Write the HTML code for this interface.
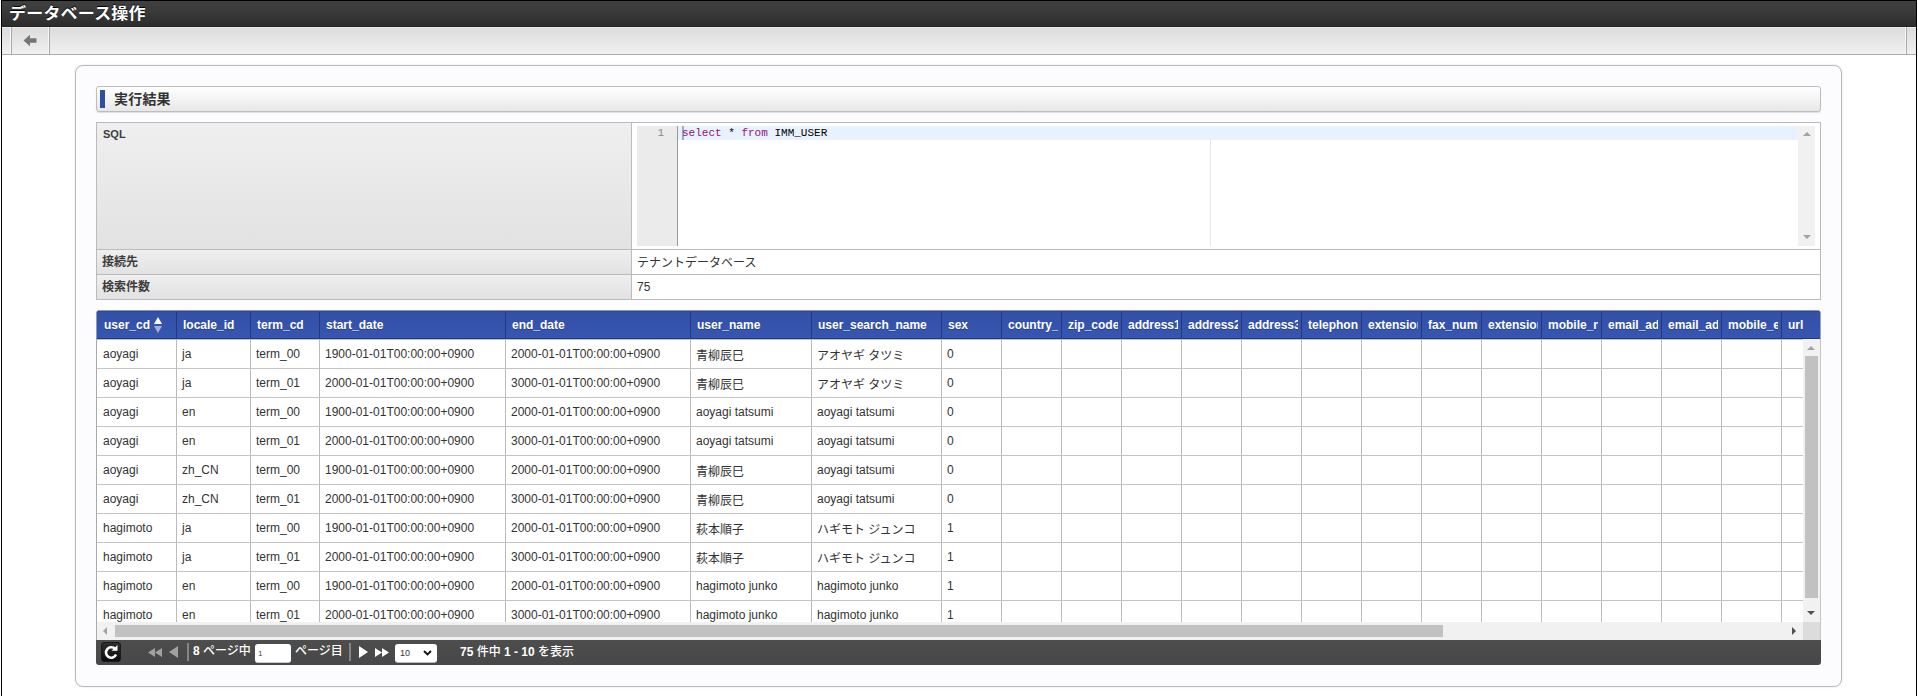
<!DOCTYPE html>
<html lang="ja">
<head>
<meta charset="utf-8">
<title>データベース操作</title>
<style>
*{box-sizing:border-box;}
html,body{margin:0;padding:0;}
body{width:1918px;height:696px;overflow:hidden;background:#fff;position:relative;
 font-family:"Liberation Sans","Noto Sans CJK JP",sans-serif;font-size:12px;color:#333;}
.abs{position:absolute;}
#frame{left:1px;top:0;width:1916px;height:696px;border:1px solid #000;border-bottom:none;background:#fff;}
#title{left:2px;top:1px;width:1914px;height:26px;background:linear-gradient(#404040,#3a3a3a 40%,#2c2c2c 96%,#222 96%);
 color:#fff;font-weight:bold;font-size:17px;line-height:25px;padding-left:7px;letter-spacing:.2px;text-shadow:0 -1px 0 #000;white-space:nowrap;
 font-family:"Liberation Sans","Noto Sans CJK JP",sans-serif;}
#toolbar{left:2px;top:27px;width:1914px;height:28px;background:linear-gradient(#ececec 0,#ececec 1px,#dcdcdc 1px,#f0f0f0);border-bottom:1px solid #aaa;}
.tsep{top:27px;width:2px;height:27px;border-left:1px solid #f6f6f6;border-right:1px solid #aaa;}
#box{left:75px;top:65px;width:1767px;height:622px;border:1px solid #bbb;border-radius:8px;background:#fcfcfe;box-shadow:0 0 2px rgba(0,0,0,.15);}
#sec{left:96px;top:86px;width:1725px;height:26px;border:1px solid #bdbdbd;border-radius:3px;background:linear-gradient(#ffffff,#f4f4f4 50%,#e7e7e7);box-shadow:0 1px 1px rgba(0,0,0,.12);}
#sec i{position:absolute;left:3px;top:3px;width:5px;height:18px;background:#2f4ea5;}
#sec span{position:absolute;left:17px;letter-spacing:.2px;top:0;line-height:24px;font-size:14px;font-weight:bold;color:#333;}
#ptab{left:96px;top:122px;width:1725px;height:178px;border:1px solid #bbb;background:#fff;}
.ph{left:97px;width:535px;background:linear-gradient(#efefef,#e2e2e2);border-bottom:1px solid #bbb;border-right:1px solid #bbb;font-weight:bold;color:#3c3c3c;padding:2px 0 0 5px;font-size:12px;}
.pd{left:632px;width:1188px;background:#fff;border-bottom:1px solid #bbb;padding:5px 0 0 5px;font-size:12px;color:#333;}
#ace{left:637px;top:126px;width:1178px;height:120px;background:#fff;overflow:hidden;font-family:"Liberation Mono",monospace;font-size:11px;}
#gut{left:0;top:0;width:41px;height:120px;background:#ebebeb;border-right:1px solid #9a9a9a;color:#888;}
#gut span{position:absolute;right:13px;top:0;line-height:14px;}
#actl{left:41px;top:0;width:1120px;height:14px;background:#e8f2fe;}
#code{left:45px;top:0;line-height:14px;white-space:pre;color:#000;}
#code b{font-weight:normal;color:#930f80;}
#cursor{left:45px;top:0;width:2px;height:14px;background:#a4abb5;}
#pm{left:573px;top:14px;width:1px;height:106px;background:#e8e8e8;}
#asb{left:1161px;top:0;width:17px;height:120px;background:#f1f1f1;}
.tri-u{position:absolute;width:0;height:0;border-left:4px solid transparent;border-right:4px solid transparent;border-bottom:4px solid #a3a3a3;}
.tri-d{position:absolute;width:0;height:0;border-left:4px solid transparent;border-right:4px solid transparent;border-top:4px solid #a3a3a3;}
.tri-l{position:absolute;width:0;height:0;border-top:4px solid transparent;border-bottom:4px solid transparent;border-right:4px solid #a3a3a3;}
.tri-r{position:absolute;width:0;height:0;border-top:4px solid transparent;border-bottom:4px solid transparent;border-left:4px solid #505050;}
#grid{left:96px;top:310px;width:1725px;height:355px;background:#fff;border-radius:3px;overflow:hidden;}
#ghead{left:0;top:0;width:1725px;height:29px;background:#3452a9;overflow:hidden;border-top:1px solid #8b98c6;border-left:1px solid #8f98b8;border-right:1px solid #9aa3c0;border-radius:3px 3px 0 0;}
#gbody{left:0;top:29px;width:1707px;height:283px;overflow:hidden;border-left:1px solid #aaa;}
table{border-collapse:separate;border-spacing:0;table-layout:fixed;}
#ghead table{position:absolute;left:0;top:0;}
#gbody tr.f td{height:1px;border-bottom:none;padding:0;background:#b9bfd3;}
#ghead th{height:28px;padding:0;border-right:1px solid #24397c;border-top:1px solid #2d4796;border-bottom:1px solid #24397c;background:linear-gradient(#3350a6,#3756b0);color:#fff;font-weight:bold;font-size:12px;text-align:left;overflow:hidden;white-space:nowrap;}
#ghead th div{padding:0 0 0 6px;height:26px;line-height:27px;overflow:hidden;white-space:nowrap;text-shadow:0 1px 0 rgba(0,0,0,.25);margin-right:3px;}
#gbody td{height:29px;padding:0 0 0 5px;border-right:1px solid #bbb;border-bottom:1px solid #c4c4c4;font-size:12px;color:#333;overflow:hidden;white-space:nowrap;}
#gbody td:first-child{padding-left:6px;}
#ghead th:first-child div{padding-left:7px;}
.sort{display:inline-block;position:relative;width:9px;height:14px;margin-left:4px;vertical-align:-3px;}
.sort .up{position:absolute;left:0;top:-1px;border-left:4px solid transparent;border-right:4px solid transparent;border-bottom:7px solid #fff;}
.sort .dn{position:absolute;left:0;top:8px;border-left:4px solid transparent;border-right:4px solid transparent;border-top:7px solid #a3afd8;}
#vsb{left:1707px;top:29px;width:18px;height:283px;background:#f1f1f1;border-right:1px solid #c6c6c6;}
#vth{left:2px;top:17px;width:13px;height:242px;background:#c1c1c1;}
#hsb{left:0;top:312px;width:1707px;height:18px;background:#f1f1f1;border-left:1px solid #aaa;}
#hth{left:18px;top:3px;width:1328px;height:12px;background:#c1c1c1;}
#corner{left:1707px;top:312px;width:18px;height:18px;background:#dcdcdc;border-right:1px solid #c6c6c6;}
#pager{left:0;top:330px;width:1725px;height:25px;background:linear-gradient(#4d4d4d,#474747);color:#fff;font-size:12px;}
#pager .t{position:absolute;top:0;line-height:22px;white-space:nowrap;font-weight:500;color:#fff;}
#reload{left:5px;top:2px;width:20px;height:20px;border-radius:3px;background:linear-gradient(#2e2e2e,#0c0c0c);border:1px solid #1a1a1a;}
.psep{top:3px;width:2px;height:18px;background:#858585;}
.inp{background:#fff;border-radius:3px;color:#333;font-size:9px;}
</style>
</head>
<body>
<div id="frame" class="abs"></div>
<div id="title" class="abs"><span style="display:inline-block;transform:scaleY(.92);transform-origin:0 55%">データベース操作</span></div>
<div id="toolbar" class="abs"></div>
<div class="tsep abs" style="left:10px"></div>
<div class="tsep abs" style="left:48px"></div>
<div class="tsep abs" style="left:1905px"></div>
<svg class="abs" style="left:23px;top:34px" width="14" height="13" viewBox="0 0 14 13"><path d="M0.5 6.5 L7 0.8 L7 4.2 L13.5 4.2 L13.5 8.8 L7 8.8 L7 12.2 Z" fill="#767676"/></svg>

<div id="box" class="abs"></div>
<div id="sec" class="abs"><i></i><span>実行結果</span></div>

<div id="ptab" class="abs"></div>
<div class="ph abs" style="top:123px;height:127px;font-size:11px;padding-top:5px;padding-left:6px">SQL</div>
<div class="pd abs" style="top:123px;height:127px;"></div>
<div class="ph abs" style="top:250px;height:25px;">接続先</div>
<div class="pd abs" style="top:250px;height:25px;padding-top:3px">テナントデータベース</div>
<div class="ph abs" style="top:275px;height:24px;border-bottom:none;">検索件数</div>
<div class="pd abs" style="top:275px;height:24px;border-bottom:none;">75</div>

<div id="ace" class="abs">
  <div id="actl" class="abs"></div>
  <div id="gut" class="abs"><span>1</span></div>
  <div id="pm" class="abs"></div>
  <div id="cursor" class="abs"></div>
  <div id="code" class="abs"><b>select</b> * <b>from</b> IMM_USER</div>
  <div id="asb" class="abs"><i class="tri-u" style="left:5px;top:6px"></i><i class="tri-d" style="left:5px;top:109px"></i></div>
</div>

<div id="grid" class="abs">
  <div id="ghead" class="abs"><table style="width:1745px"><colgroup><col style="width:80px"><col style="width:74px"><col style="width:69px"><col style="width:186px"><col style="width:185px"><col style="width:121px"><col style="width:130px"><col style="width:60px"><col style="width:60px"><col style="width:60px"><col style="width:60px"><col style="width:60px"><col style="width:60px"><col style="width:60px"><col style="width:60px"><col style="width:60px"><col style="width:60px"><col style="width:60px"><col style="width:60px"><col style="width:60px"><col style="width:60px"><col style="width:60px"></colgroup><tr><th><div>user_cd<span class="sort"><i class="up"></i><i class="dn"></i></span></div></th><th><div>locale_id</div></th><th><div>term_cd</div></th><th><div>start_date</div></th><th><div>end_date</div></th><th><div>user_name</div></th><th><div>user_search_name</div></th><th><div>sex</div></th><th><div>country_cd</div></th><th><div>zip_code</div></th><th><div>address1</div></th><th><div>address2</div></th><th><div>address3</div></th><th><div>telephone_number</div></th><th><div>extension_number</div></th><th><div>fax_number</div></th><th><div>extension_fax_number</div></th><th><div>mobile_number</div></th><th><div>email_address1</div></th><th><div>email_address2</div></th><th><div>mobile_email_address</div></th><th><div>url</div></th></tr></table></div>
  <div id="gbody" class="abs"><table style="width:1745px"><colgroup><col style="width:80px"><col style="width:74px"><col style="width:69px"><col style="width:186px"><col style="width:185px"><col style="width:121px"><col style="width:130px"><col style="width:60px"><col style="width:60px"><col style="width:60px"><col style="width:60px"><col style="width:60px"><col style="width:60px"><col style="width:60px"><col style="width:60px"><col style="width:60px"><col style="width:60px"><col style="width:60px"><col style="width:60px"><col style="width:60px"><col style="width:60px"><col style="width:60px"></colgroup><tr class='f'><td></td><td></td><td></td><td></td><td></td><td></td><td></td><td></td><td></td><td></td><td></td><td></td><td></td><td></td><td></td><td></td><td></td><td></td><td></td><td></td><td></td><td></td></tr><tr><td>aoyagi</td><td>ja</td><td>term_00</td><td>1900-01-01T00:00:00+0900</td><td>2000-01-01T00:00:00+0900</td><td>青柳辰巳</td><td>アオヤギ タツミ</td><td>0</td><td></td><td></td><td></td><td></td><td></td><td></td><td></td><td></td><td></td><td></td><td></td><td></td><td></td><td></td></tr><tr><td>aoyagi</td><td>ja</td><td>term_01</td><td>2000-01-01T00:00:00+0900</td><td>3000-01-01T00:00:00+0900</td><td>青柳辰巳</td><td>アオヤギ タツミ</td><td>0</td><td></td><td></td><td></td><td></td><td></td><td></td><td></td><td></td><td></td><td></td><td></td><td></td><td></td><td></td></tr><tr><td>aoyagi</td><td>en</td><td>term_00</td><td>1900-01-01T00:00:00+0900</td><td>2000-01-01T00:00:00+0900</td><td>aoyagi tatsumi</td><td>aoyagi tatsumi</td><td>0</td><td></td><td></td><td></td><td></td><td></td><td></td><td></td><td></td><td></td><td></td><td></td><td></td><td></td><td></td></tr><tr><td>aoyagi</td><td>en</td><td>term_01</td><td>2000-01-01T00:00:00+0900</td><td>3000-01-01T00:00:00+0900</td><td>aoyagi tatsumi</td><td>aoyagi tatsumi</td><td>0</td><td></td><td></td><td></td><td></td><td></td><td></td><td></td><td></td><td></td><td></td><td></td><td></td><td></td><td></td></tr><tr><td>aoyagi</td><td>zh_CN</td><td>term_00</td><td>1900-01-01T00:00:00+0900</td><td>2000-01-01T00:00:00+0900</td><td>青柳辰巳</td><td>aoyagi tatsumi</td><td>0</td><td></td><td></td><td></td><td></td><td></td><td></td><td></td><td></td><td></td><td></td><td></td><td></td><td></td><td></td></tr><tr><td>aoyagi</td><td>zh_CN</td><td>term_01</td><td>2000-01-01T00:00:00+0900</td><td>3000-01-01T00:00:00+0900</td><td>青柳辰巳</td><td>aoyagi tatsumi</td><td>0</td><td></td><td></td><td></td><td></td><td></td><td></td><td></td><td></td><td></td><td></td><td></td><td></td><td></td><td></td></tr><tr><td>hagimoto</td><td>ja</td><td>term_00</td><td>1900-01-01T00:00:00+0900</td><td>2000-01-01T00:00:00+0900</td><td>萩本順子</td><td>ハギモト ジュンコ</td><td>1</td><td></td><td></td><td></td><td></td><td></td><td></td><td></td><td></td><td></td><td></td><td></td><td></td><td></td><td></td></tr><tr><td>hagimoto</td><td>ja</td><td>term_01</td><td>2000-01-01T00:00:00+0900</td><td>3000-01-01T00:00:00+0900</td><td>萩本順子</td><td>ハギモト ジュンコ</td><td>1</td><td></td><td></td><td></td><td></td><td></td><td></td><td></td><td></td><td></td><td></td><td></td><td></td><td></td><td></td></tr><tr><td>hagimoto</td><td>en</td><td>term_00</td><td>1900-01-01T00:00:00+0900</td><td>2000-01-01T00:00:00+0900</td><td>hagimoto junko</td><td>hagimoto junko</td><td>1</td><td></td><td></td><td></td><td></td><td></td><td></td><td></td><td></td><td></td><td></td><td></td><td></td><td></td><td></td></tr><tr><td>hagimoto</td><td>en</td><td>term_01</td><td>2000-01-01T00:00:00+0900</td><td>3000-01-01T00:00:00+0900</td><td>hagimoto junko</td><td>hagimoto junko</td><td>1</td><td></td><td></td><td></td><td></td><td></td><td></td><td></td><td></td><td></td><td></td><td></td><td></td><td></td><td></td></tr></table></div>
  <div id="vsb" class="abs"><i class="tri-u" style="left:4px;top:7px"></i><div id="vth" class="abs"></div><i class="tri-d" style="left:4px;top:272px;border-top-color:#505050"></i></div>
  <div id="hsb" class="abs"><i class="tri-l" style="left:6px;top:5px"></i><div id="hth" class="abs"></div><i class="tri-r" style="left:1695px;top:5px"></i></div>
  <div id="corner" class="abs"></div>
  <div id="pager" class="abs">
    <div id="reload" class="abs"><svg width="18" height="17" viewBox="0 0 18 17" style="position:absolute;left:0;top:1px"><path d="M13.2 5.2 A5.2 5.2 0 1 0 14 10.5" fill="none" stroke="#fff" stroke-width="2.6"/><path d="M9.5 6.8 L15.5 6.8 L15.5 1 Z" fill="#fff"/></svg></div>
    <svg class="abs" style="left:52px;top:8px" width="14" height="9" viewBox="0 0 14 9"><path d="M7 0 L7 9 L0 4.5 Z M14 0 L14 9 L7 4.5 Z" fill="#a2a2a2"/></svg>
    <svg class="abs" style="left:73px;top:6px" width="9" height="12" viewBox="0 0 9 12"><path d="M9 0 L9 12 L0 6 Z" fill="#a2a2a2"/></svg>
    <div class="psep abs" style="left:91px"></div>
    <div class="t" style="left:97px"><b>8</b> ページ中</div>
    <div class="inp abs" style="left:159px;top:4px;width:36px;height:19px;padding:5px 0 0 3px;line-height:10px;font-size:8px;color:#444;border-bottom:1px solid #ccc;">1</div>
    <div class="t" style="left:199px">ページ目</div>
    <div class="psep abs" style="left:253px"></div>
    <svg class="abs" style="left:263px;top:6px" width="9" height="12" viewBox="0 0 9 12"><path d="M0 0 L0 12 L9 6 Z" fill="#fff"/></svg>
    <svg class="abs" style="left:279px;top:8px" width="14" height="9" viewBox="0 0 14 9"><path d="M0 0 L0 9 L7 4.5 Z M7 0 L7 9 L14 4.5 Z" fill="#fff"/></svg>
    <div class="inp abs" style="left:299px;top:4px;width:42px;height:18px;padding:4px 0 0 5px;line-height:10px;color:#333;box-shadow:0 1px 0 #bbb;">10<svg style="position:absolute;right:5px;top:5.5px" width="9" height="6" viewBox="0 0 9 6"><path d="M1 1 L4.5 4.5 L8 1" fill="none" stroke="#111" stroke-width="1.8"/></svg></div>
    <div class="t" style="left:364px;top:1px"><b>75</b> 件中 <b>1 - 10</b> を表示</div>
  </div>
</div>
</body>
</html>
